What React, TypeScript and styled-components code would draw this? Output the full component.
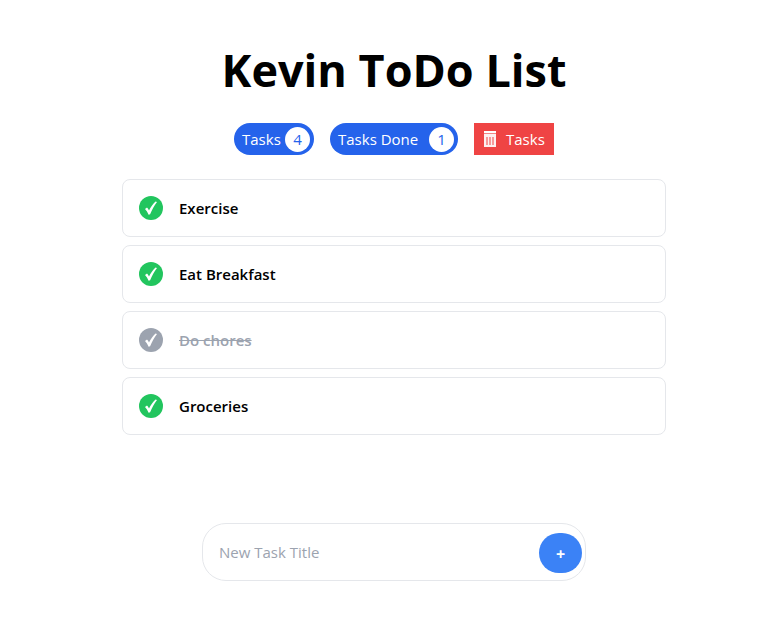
import React, { useState } from "react";
import styled, { createGlobalStyle } from "styled-components";

const GlobalStyle = createGlobalStyle`
  *, *::before, *::after { box-sizing: border-box; }
  body {
    margin: 0;
    background: #ffffff;
    color: #000000;
    font-family: "Segoe UI", "Open Sans", "Noto Sans", sans-serif;
    font-size: 16px;
    line-height: 24px;
  }
  button, input { font: inherit; }
`;

const Page = styled.main`
  display: flex;
  flex-direction: column;
  align-items: center;
  padding: 46px 16px 48px 22px;
`;

const Title = styled.h1`
  margin: 0 0 29px;
  font-size: 45px;
  line-height: 48px;
  font-weight: 700;
  text-align: center;
`;

const Toolbar = styled.div`
  display: flex;
  justify-content: center;
  gap: 16px;
  margin-bottom: 24px;
`;

const Pill = styled.div<{ $wide?: boolean }>`
  display: flex;
  align-items: center;
  justify-content: space-between;
  width: ${(p) => (p.$wide ? 128 : 80)}px;
  height: 32px;
  padding: 0 4px 0 8px;
  border-radius: 16px;
  background: #2563eb;
  color: #ffffff;
  font-size: 15px;
  white-space: nowrap;
`;

const Count = styled.span`
  display: grid;
  place-items: center;
  width: 25px;
  height: 25px;
  border-radius: 50%;
  background: #ffffff;
  color: #2563eb;
`;

const ClearButton = styled.button`
  display: flex;
  align-items: center;
  gap: 8px;
  width: 80px;
  height: 32px;
  padding: 0 8px;
  border: 0;
  background: #ef4444;
  color: #ffffff;
  font-size: 15px;
  cursor: pointer;
`;

const List = styled.ul`
  display: grid;
  gap: 8px;
  width: 100%;
  max-width: 544px;
  margin: 0 0 88px;
  padding: 0;
  list-style: none;
`;

const Task = styled.label<{ $done: boolean }>`
  display: flex;
  align-items: center;
  gap: 16px;
  padding: 16px;
  border: 1px solid #e5e7eb;
  border-radius: 8px;
  color: ${(p) => (p.$done ? "#9ca3af" : "#000000")};
  font-size: 15px;
  font-weight: 600;
  text-decoration: ${(p) => (p.$done ? "line-through" : "none")};
  cursor: pointer;
`;

const Tick = styled.span`
  display: grid;
  width: 24px;
  height: 24px;

  > * { grid-area: 1 / 1; }
`;

const TickInput = styled.input`
  appearance: none;
  width: 24px;
  height: 24px;
  margin: 0;
  border-radius: 50%;
  background: #22c55e;
  cursor: pointer;

  &:checked { background: #9ca3af; }
`;

const TickMark = styled.svg`
  z-index: 1;
  pointer-events: none;
`;

const Form = styled.form`
  display: flex;
  align-items: center;
  width: 100%;
  max-width: 384px;
  height: 58px;
  padding: 0 3px 0 16px;
  border: 1px solid #e5e7eb;
  border-radius: 24px;
`;

const TitleInput = styled.input`
  flex: 1;
  min-width: 0;
  padding: 0;
  border: 0;
  outline: 0;
  background: transparent;
  color: #000000;
  font-size: 15px;

  &::placeholder { color: #9ca3af; opacity: 1; }
`;

const AddButton = styled.button`
  width: 43px;
  height: 40px;
  margin-top: 2px;
  padding: 2px 0 0;
  border: 0;
  border-radius: 20px;
  background: #3b82f6;
  color: #ffffff;
  font-weight: 700;
  cursor: pointer;
`;

const TrashIcon = () => (
  <svg width="16" height="16" viewBox="0 0 16 16" aria-hidden="true">
    <path d="M2 0h12v2H2z" fill="#fff" />
    <path d="M2 2h12v1H2z" fill="#fff" fillOpacity="0.35" />
    <path d="M2 3h12v13H2z" fill="#fff" fillOpacity="0.92" />
    <path d="M4 6h2v8H4zM7 6h2v8H7zM10 6h2v8h-2z" fill="#f79a9a" />
  </svg>
);

const CheckIcon = () => (
  <TickMark width="24" height="24" viewBox="0 0 24 24" aria-hidden="true">
    <path
      d="M6 13l2-1.500c.8.700 1.400 1.700 2 3C11.700 11 13.800 8 16.500 5.500l1.500.5C15.300 9.600 13 13.700 11.100 18.300l-1.500.4C8.600 16.500 7.500 14.600 6 13z"
      fill="#fff"
    />
  </TickMark>
);

const initialTasks = [
  { id: 1, title: "Exercise", done: false },
  { id: 2, title: "Eat Breakfast", done: false },
  { id: 3, title: "Do chores", done: true },
  { id: 4, title: "Groceries", done: false },
];

export default function App() {
  const [tasks, setTasks] = useState(initialTasks);
  const [title, setTitle] = useState("");

  const toggle = (id: number) =>
    setTasks(tasks.map((t) => (t.id === id ? { ...t, done: !t.done } : t)));

  const add = (e: React.FormEvent) => {
    e.preventDefault();
    if (!title.trim()) return;
    setTasks([...tasks, { id: Date.now(), title: title.trim(), done: false }]);
    setTitle("");
  };

  return (
    <>
      <GlobalStyle />
      <Page>
        <Title>Kevin ToDo List</Title>
        <Toolbar>
          <Pill>
            Tasks <Count>{tasks.length}</Count>
          </Pill>
          <Pill $wide>
            Tasks Done <Count>{tasks.filter((t) => t.done).length}</Count>
          </Pill>
          <ClearButton type="button" onClick={() => setTasks([])}>
            <TrashIcon />
            Tasks
          </ClearButton>
        </Toolbar>
        <List>
          {tasks.map((t) => (
            <li key={t.id}>
              <Task $done={t.done}>
                <Tick>
                  <TickInput type="checkbox" checked={t.done} onChange={() => toggle(t.id)} />
                  <CheckIcon />
                </Tick>
                <span>{t.title}</span>
              </Task>
            </li>
          ))}
        </List>
        <Form onSubmit={add}>
          <TitleInput
            aria-label="New Task Title"
            placeholder="New Task Title"
            value={title}
            onChange={(e) => setTitle(e.target.value)}
          />
          <AddButton type="submit" aria-label="Add task">+</AddButton>
        </Form>
      </Page>
    </>
  );
}
